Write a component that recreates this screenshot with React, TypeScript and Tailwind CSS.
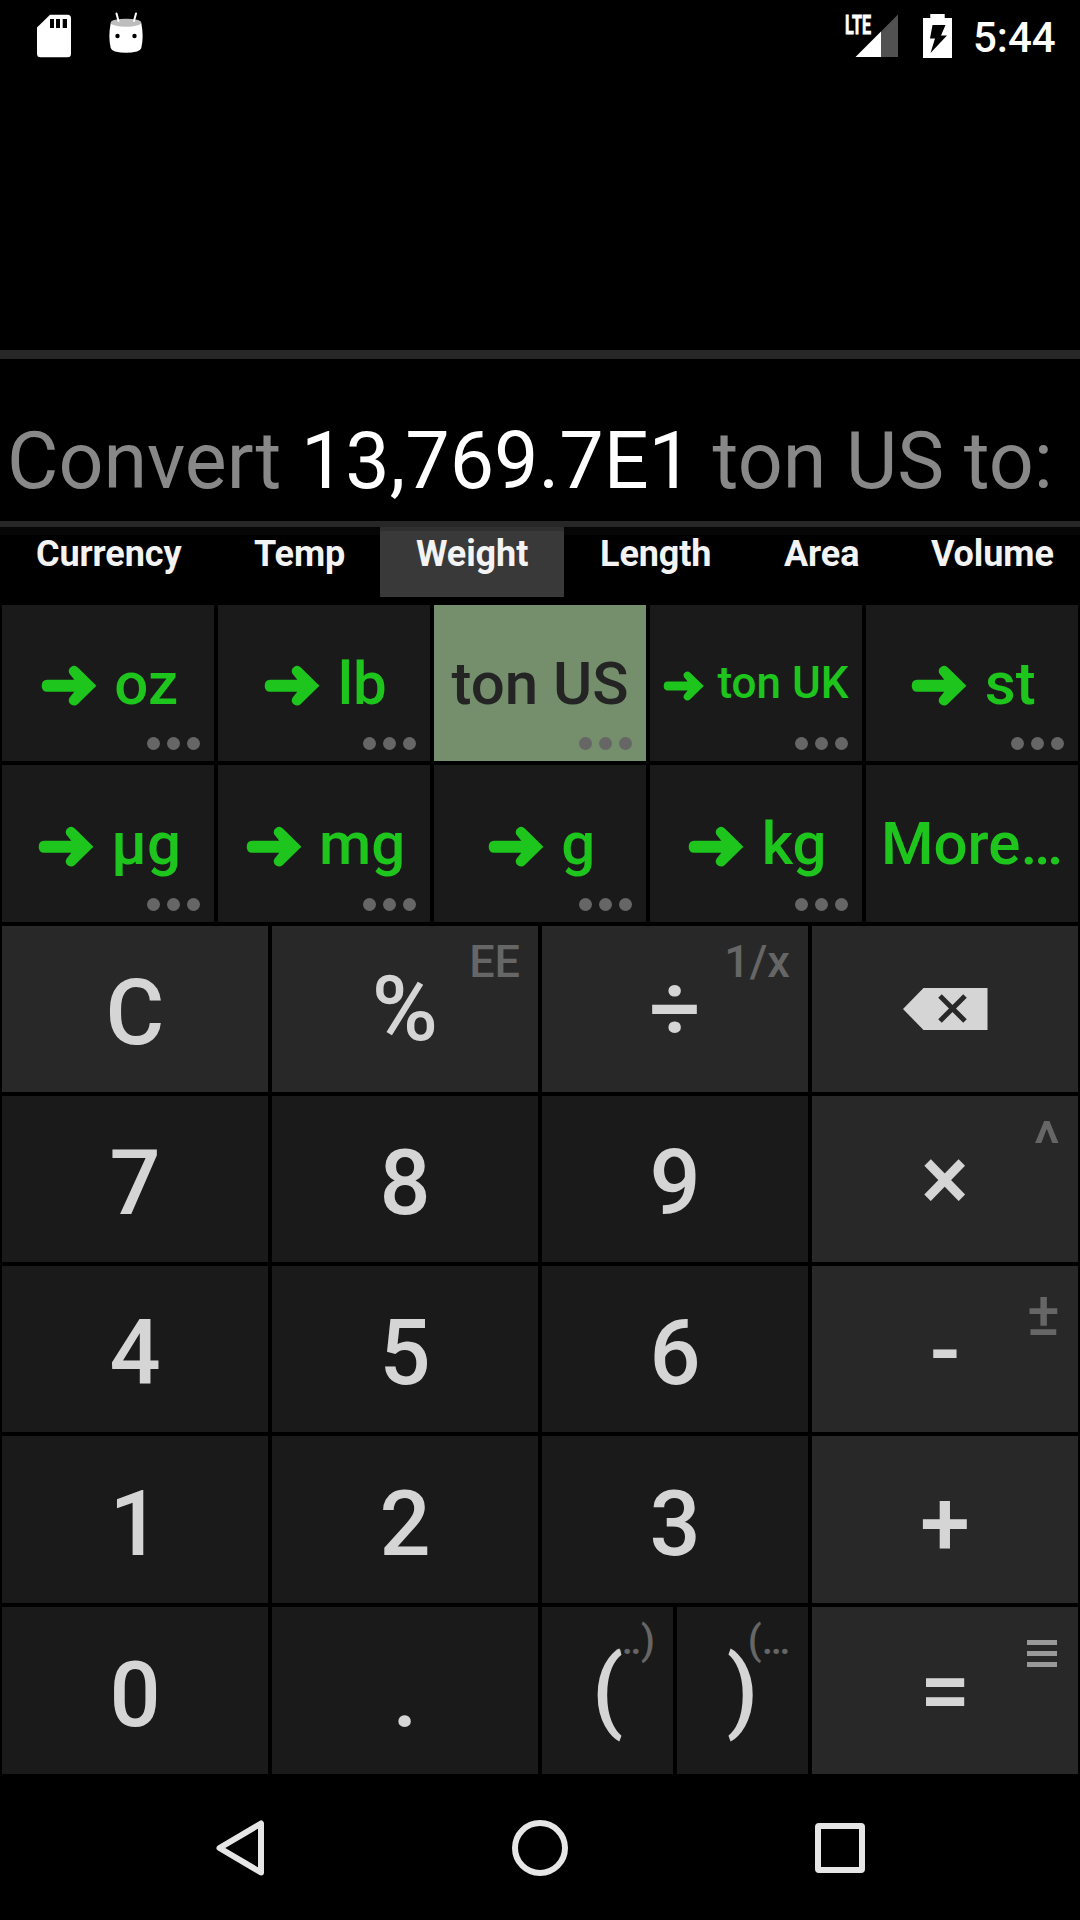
import React from "react";

const units: { label: string; active?: boolean; small?: boolean; more?: boolean }[] = [
  { label: "oz" },
  { label: "lb" },
  { label: "ton US", active: true },
  { label: "ton UK", small: true },
  { label: "st" },
  { label: "µg" },
  { label: "mg" },
  { label: "g" },
  { label: "kg" },
  { label: "More…", more: true },
];

const tabs = ["Currency", "Temp", "Weight", "Length", "Area", "Volume"];

function Arrow() {
  return (
    <svg viewBox="0 0 61.5 60" className="h-[1em] w-[1.025em] shrink-0" fill="currentColor">
      <path d="M9.2 26.7H36.3L31.3 20.5A5.3 5.3 0 0 1 39.8 14.5L58.4 32.7L39.8 50.9A5.3 5.3 0 0 1 31.3 44.9L36.3 38.7H9.2Q3.7 38.7 3.7 32.7T9.2 26.7Z" />
    </svg>
  );
}

function Dots() {
  return (
    <div className="absolute right-[14px] bottom-[11px] flex gap-[7px]">
      <i className="size-[13px] rounded-full bg-[#666]" />
      <i className="size-[13px] rounded-full bg-[#666]" />
      <i className="size-[13px] rounded-full bg-[#666]" />
    </div>
  );
}

function StatusBar() {
  return (
    <header className="flex h-[72px] items-start">
      <svg className="mt-[14px] ml-[37px] h-[44px] w-[34px]" viewBox="0 0 34 44">
        <path fill="#fff" d="M13 .7H30.5Q34 .7 34 4.2V39.7Q34 43.2 30.5 43.2H3.5Q0 43.2 0 39.7V13.5Z" />
        <path fill="#000" d="M13 5H17V14H13ZM19 5H23V14H19ZM25.7 5H30V14H25.7Z" />
      </svg>
      <svg className="mt-[12px] ml-[38px] h-[42px] w-[34px]" viewBox="0 0 34 42">
        <path fill="#fff" d="M1.7 11Q17 17 32.3 11Q35 25 32.3 36Q31.5 38.5 28 39.5Q17 42 6 39.5Q2.5 38.5 1.7 36Q-1 25 1.7 11Z" />
        <ellipse cx="17" cy="10.7" rx="15.3" ry="4" fill="#bdbdbd" />
        <path d="M7.5 1.5L9.5 9M27 1.5L25 9" stroke="#fff" strokeWidth="2" strokeLinecap="round" />
        <circle cx="8.5" cy="24" r="2.2" />
        <circle cx="25.5" cy="24" r="2.2" />
      </svg>
      <div className="relative mt-[14px] ml-[702px] h-[44px] w-[53px] shrink-0">
        <svg className="absolute inset-0 h-[44px] w-[53px]" viewBox="0 0 53 44">
          <path fill="#515151" d="M53 .5V43H36V17.5Z" />
          <path fill="#fff" d="M36 17.5V43H10.5Z" />
        </svg>
        <span className="absolute top-[-2px] left-0 origin-left scale-x-[0.62] text-[26px] leading-[26px] font-bold [-webkit-text-stroke:0.8px_white]">
          LTE
        </span>
      </div>
      <svg className="mt-[14px] ml-[25px] h-[44px] w-[29px] shrink-0" viewBox="0 0 29 44">
        <path fill="#fff" d="M7.3 0H21.7V4H29V44H0V4H7.3Z" />
        <path fill="#000" d="M9.5 11H22.5L18 21.5H24L7.5 39L12 24.5H7Z" />
      </svg>
      <span className="mt-[13px] ml-[21px] text-[42px] leading-[49px] font-medium">5:44</span>
    </header>
  );
}

function Key({
  children,
  dark = false,
  pad = "pt-[10px]",
  hint,
}: {
  children: React.ReactNode;
  dark?: boolean;
  pad?: string;
  hint?: React.ReactNode;
}) {
  return (
    <button
      className={`relative flex flex-1 items-center justify-center text-[90px] leading-[106px] font-medium text-[#d5d5d5] ${
        dark ? "bg-[#1a1a1a]" : "bg-[#282828]"
      } ${pad}`}
    >
      {hint}
      <span className="relative">{children}</span>
    </button>
  );
}

function Hint({ children }: { children: React.ReactNode }) {
  return (
    <span className="absolute top-[9px] right-[18px] text-[45px] leading-[53px] text-[#666]">{children}</span>
  );
}

function ParenHint({ children }: { children: React.ReactNode }) {
  return (
    <span className="absolute top-[10px] right-[18px] text-[40px] leading-[47px] text-[#666]">{children}</span>
  );
}

export default function App() {
  return (
    <div className="flex h-[1920px] w-[1080px] flex-col overflow-hidden bg-black font-[Roboto,sans-serif] text-white">
      <StatusBar />
      <div className="h-[278px]" />
      <div className="h-[9px] bg-[#272727]" />
      <div className="h-[162px] pt-[55px] pl-[7px] text-[79px] leading-[94px] whitespace-pre text-[#888]">
        Convert <span className="text-white">13,769.7E1</span> ton US to:
      </div>
      <div className="h-[6px] bg-[#272727]" />
      <nav className="relative grid h-[78px] grid-cols-[218px_162px_184px_184px_147px_200px] overflow-hidden">
        {tabs.map((t) => (
          <div
            key={t}
            className={`h-[70px] pt-[6px] pl-[36px] text-[36px] leading-[42px] font-bold tracking-[-0.1px] text-[#f3f3f3] ${
              t === "Weight" ? "bg-[#393939]" : ""
            }`}
          >
            {t}
          </div>
        ))}
        <div className="absolute top-0 left-[380px] h-[4px] w-[184px] bg-[#303030]" />
        <div className="absolute top-0 left-0 h-[8px] w-[380px] bg-[#060606]" />
        <div className="absolute top-0 right-0 h-[8px] w-[516px] bg-[#060606]" />
      </nav>

      <section className="grid grid-cols-5 grid-rows-[156px_157px] gap-1 px-0.5">
        {units.map((u) => (
          <button
            key={u.label}
            className={`relative flex items-center justify-center font-medium whitespace-pre ${
              u.active ? "bg-[#758f6c] text-[#242424]" : "bg-[#1a1a1a] text-[#1dc51d]"
            } ${u.small ? "pt-px pr-[2px] text-[44px]" : "text-[60px]"} leading-[71px]`}
          >
            {!u.active && !u.more && <Arrow />}
            <span>{u.active || u.more ? u.label : " " + u.label}</span>
            {!u.more && <Dots />}
          </button>
        ))}
      </section>

      <section className="mt-1 grid grid-rows-[166px_166px_166px_167px_167px] gap-1 px-0.5">
        <div className="flex gap-1">
          <Key>C</Key>
          <Key pad="pt-[2px]" hint={<Hint>EE</Hint>}>%</Key>
          <Key pad="pt-[2px]" hint={<Hint>1/x</Hint>}>÷</Key>
          <Key pad="">
            <svg className="h-[42px] w-[85px]" viewBox="0 0 85 42">
              <path fill="#d5d5d5" d="M0 21L20.5 0H84.5V42H20.5Z" />
              <path stroke="#282828" strokeWidth="5" d="M37 8L62 33M62 8L37 33" />
            </svg>
          </Key>
        </div>
        <div className="flex gap-1">
          <Key dark>7</Key>
          <Key dark>8</Key>
          <Key dark>9</Key>
          <Key
            pad="pt-[2px]"
            hint={<span className="absolute top-[12px] right-[18px] text-[62px] leading-[72px] text-[#666]">^</span>}
          >
            ×
          </Key>
        </div>
        <div className="flex gap-1">
          <Key dark>4</Key>
          <Key dark>5</Key>
          <Key dark>6</Key>
          <Key
            pad="pt-[3px]"
            hint={<span className="absolute top-[12px] right-[18px] text-[62px] leading-[72px] text-[#666]">±</span>}
          >
            -
          </Key>
        </div>
        <div className="flex gap-1">
          <Key dark>1</Key>
          <Key dark>2</Key>
          <Key dark>3</Key>
          <Key>+</Key>
        </div>
        <div className="flex gap-1">
          <Key dark>0</Key>
          <Key dark>.</Key>
          <div className="flex flex-1 gap-1">
            <Key dark pad="" hint={<ParenHint>…)</ParenHint>}>(</Key>
            <Key dark pad="" hint={<ParenHint>(…</ParenHint>}>)</Key>
          </div>
          <Key
            pad="pt-[2px]"
            hint={
              <div className="absolute top-[33px] right-[21px] flex w-[30px] flex-col gap-[6px]">
                <i className="h-[5px] bg-[#999]" />
                <i className="h-[5px] bg-[#999]" />
                <i className="h-[5px] bg-[#999]" />
              </div>
            }
          >
            =
          </Key>
        </div>
      </section>

      <footer className="flex h-[146px] items-center pt-[2px] pl-[216px]">
        <svg className="h-[56px] w-[48px]" viewBox="0 0 48 56" fill="none" stroke="#e6e6e6" strokeWidth="6" strokeLinejoin="round">
          <path d="M45 3.5V52.5L3.5 28Z" />
        </svg>
        <div className="ml-[248px] size-[56px] rounded-full border-[6px] border-[#e6e6e6]" />
        <div className="ml-[247px] size-[50px] rounded-[4px] border-[6px] border-[#e6e6e6]" />
      </footer>
    </div>
  );
}
